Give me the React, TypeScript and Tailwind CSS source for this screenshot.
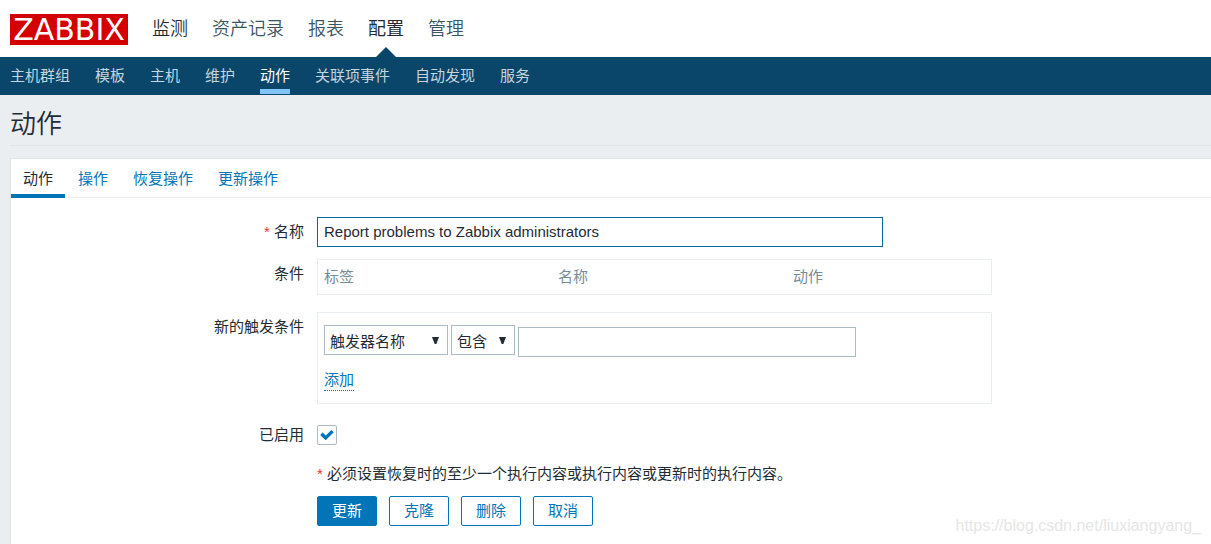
import type { ReactNode } from "react";

const topMenu = ["监测", "资产记录", "报表", "配置", "管理"];
const subMenu = ["主机群组", "模板", "主机", "维护", "动作", "关联项事件", "自动发现", "服务"];
const tabs = ["动作", "操作", "恢复操作", "更新操作"];

const labelCell = "w-[293px] shrink-0 text-right";

function Row({ label, children, className }: { label?: ReactNode; children: ReactNode; className: string }) {
  return (
    <div className={`flex gap-[13px] ${className}`}>
      <div className={labelCell}>{label}</div>
      <div className="min-w-0 flex-1">{children}</div>
    </div>
  );
}

function Select({ label, options, className }: { label: string; options: string[]; className: string }) {
  return (
    <div className={`relative ${className}`}>
      <select
        aria-label={label}
        className="h-[30px] w-full appearance-none border border-[#acbbc2] bg-white pt-1 pr-5 pl-[5px] text-[15px] leading-6 text-[#1f2c33] outline-none"
      >
        {options.map((o) => (
          <option key={o}>{o}</option>
        ))}
      </select>
      <svg
        className="pointer-events-none absolute top-3 right-[9px] h-[7px] w-[7px]"
        viewBox="0 0 7 7"
        fill="#1f2c33"
        aria-hidden="true"
      >
        <path d="M0 0H7L4.3 7H2.7Z" />
      </svg>
    </div>
  );
}

const required = <span className="text-[#e33734]">*</span>;

export default function App() {
  return (
    <div className="relative flex min-h-screen flex-col bg-[#ebeef0] font-['Liberation_Sans','Noto_Sans_CJK_SC',sans-serif] text-[15px] leading-6 text-[#1f2c33]">
      <header>
        <div className="flex h-[57px] items-center bg-white pl-[10px]">
          <a
            href="#"
            className="mt-[2px] flex h-[31px] w-[118px] items-center justify-center bg-[#d40000] font-['DejaVu_Sans',sans-serif] text-[30px] leading-[31px] text-white"
          >
            ZABBIX
          </a>
          <nav className="ml-6 flex h-full gap-6 text-[18px] font-[350]">
            {topMenu.map((item) => (
              <a
                key={item}
                href="#"
                className={`relative flex items-center ${
                  item === "配置" ? "font-normal text-[#1f2c33]" : item === "监测" ? "text-[#1f2c33]" : "text-[#3c5563]"
                }`}
              >
                {item}
                {item === "配置" && (
                  <svg
                    className="absolute bottom-0 left-1/2 h-[10px] w-5 -translate-x-1/2"
                    viewBox="0 0 20 10"
                    fill="#0a466a"
                    aria-hidden="true"
                  >
                    <path d="M0 10L10 0L20 10Z" />
                  </svg>
                )}
              </a>
            ))}
          </nav>
        </div>
        <nav className="flex h-[38px] gap-[25px] bg-[#0a466a] pl-[10px]">
          {subMenu.map((item) => (
            <a
              key={item}
              href="#"
              className={`mb-px flex items-center border-b-5 pt-[5px] ${
                item === "动作" ? "border-[#7fc5f5] text-white" : "border-transparent text-[#c5d5df]"
              }`}
            >
              {item}
            </a>
          ))}
        </nav>
      </header>

      <div className="ml-[10px] flex h-[51px] items-center border-b border-[#dfe4e7] pt-2">
        <h1 className="text-[26px] leading-8 font-[350]">动作</h1>
      </div>

      <main className="mt-3 ml-[10px] flex-1 border-t border-l border-[#dfe4e7] bg-white">
        <div className="flex h-[39px] gap-px border-b border-[#ebeef0]" role="tablist">
          {tabs.map((tab, i) => (
            <button
              key={tab}
              type="button"
              role="tab"
              aria-selected={i === 0}
              className={`-mb-px border-b-4 px-3 pt-1 ${
                i === 0 ? "border-[#0275b8] text-[#1f2c33]" : "border-transparent text-[#0275b8]"
              }`}
            >
              {tab}
            </button>
          ))}
        </div>

        <form onSubmit={(e) => e.preventDefault()}>
          <Row
            className="mt-[19px]"
            label={
              <label htmlFor="name" className="block pt-[3px]">
                {required} 名称
              </label>
            }
          >
            <input
              id="name"
              type="text"
              defaultValue="Report problems to Zabbix administrators"
              className="block h-[30px] w-full max-w-[566px] border border-[#006a9e] bg-white px-[6px] pb-[2px] text-[15px] outline-none"
            />
          </Row>

          <Row className="mt-3" label={<div className="pt-[3px]">条件</div>}>
            <div className="max-w-[675px] border border-[#ebeef0] px-[6px] py-[5px]">
              <table className="w-full table-fixed text-left text-[#768d99]">
                <thead>
                  <tr>
                    <th className="w-[234px] p-0 font-normal">标签</th>
                    <th className="w-[235px] p-0 font-normal">名称</th>
                    <th className="p-0 font-normal">动作</th>
                  </tr>
                </thead>
              </table>
            </div>
          </Row>

          <Row className="mt-[17px]" label={<div className="pt-[3px]">新的触发条件</div>}>
            <div className="max-w-[675px] border border-[#ebeef0] px-[6px] pt-3 pb-3">
              <div className="flex items-start gap-[3px]">
                <Select label="条件类型" options={["触发器名称"]} className="w-[124px]" />
                <Select label="运算符" options={["包含"]} className="w-16" />
                <input
                  type="text"
                  aria-label="值"
                  className="mt-[2px] h-[30px] w-full max-w-[338px] border border-[#acbbc2] bg-white px-[6px] outline-none"
                />
              </div>
              <div className="mt-3 flex">
                <button type="button" className="h-[22px] border-b border-dotted border-[#0275b8] leading-5 text-[#0275b8]">
                  添加
                </button>
              </div>
            </div>
          </Row>

          <Row
            className="mt-[19px] items-center"
            label={
              <label htmlFor="enabled" className="block">
                已启用
              </label>
            }
          >
            <div className="relative h-5 w-5">
              <input
                id="enabled"
                type="checkbox"
                defaultChecked
                className="peer block h-5 w-5 appearance-none rounded-xs border border-[#acbbc2] bg-white"
              />
              <svg
                className="pointer-events-none absolute top-1 left-[3px] hidden h-3 w-[14px] peer-checked:block"
                viewBox="0 0 14 12"
                fill="none"
                stroke="#0275b8"
                strokeWidth="3.4"
                aria-hidden="true"
              >
                <path d="M1.4 4.7L5.7 8.9L12.6 2.1" />
              </svg>
            </div>
          </Row>

          <Row className="mt-[15px]">
            {required} 必须设置恢复时的至少一个执行内容或执行内容或更新时的执行内容。
          </Row>

          <Row className="mt-[10px] pb-[18px]">
            <div className="flex gap-3">
              <button type="submit" className="h-[30px] w-[60px] rounded-xs border border-[#0275b8] bg-[#0275b8] text-white">
                更新
              </button>
              {["克隆", "删除", "取消"].map((b) => (
                <button
                  key={b}
                  type="button"
                  className="h-[30px] w-[60px] rounded-xs border border-[#0275b8] bg-white text-[#0275b8]"
                >
                  {b}
                </button>
              ))}
            </div>
          </Row>
        </form>
      </main>

      <div className="pointer-events-none absolute right-[10px] bottom-[6px] text-[16px] text-[#e6e6e6]">
        https://blog.csdn.net/liuxiangyang_
      </div>
    </div>
  );
}
